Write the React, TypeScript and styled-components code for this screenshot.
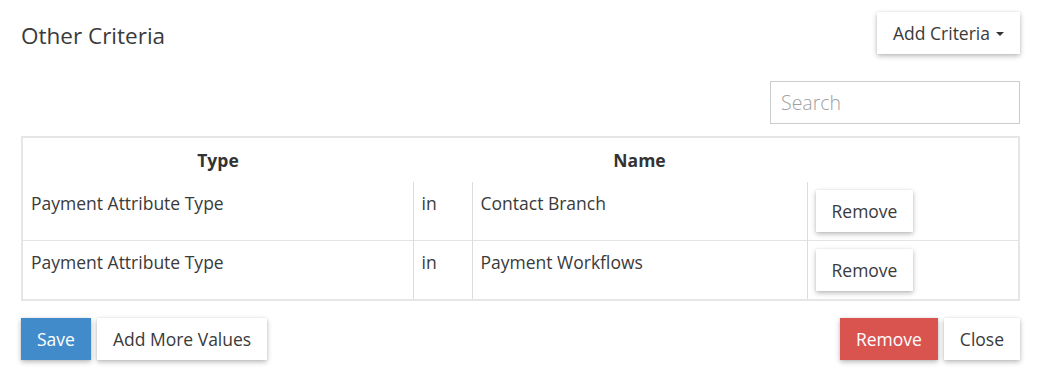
import React from "react";
import styled, { createGlobalStyle } from "styled-components";

const GlobalStyle = createGlobalStyle`
  html, body {
    margin: 0;
    padding: 0;
    background: #fff;
  }
  body {
    font-family: "Open Sans", "Liberation Sans", sans-serif;
    color: #333;
  }
`;

type Criterion = {
  type: string;
  operator: string;
  name: string;
};

const criteria: Criterion[] = [
  { type: "Payment Attribute Type", operator: "in", name: "Contact Branch" },
  { type: "Payment Attribute Type", operator: "in", name: "Payment Workflows" },
];

const App = () => {
  return (
    <S.Page>
      <GlobalStyle />
      <S.Header>
        <S.Title>Other Criteria</S.Title>
        <S.Button>
          Add Criteria
          <S.Caret />
        </S.Button>
      </S.Header>
      <S.SearchRow>
        <S.SearchInput placeholder="Search" />
      </S.SearchRow>
      <S.Table>
        <colgroup>
          <col style={{ width: 391 }} />
          <col style={{ width: 59 }} />
          <col style={{ width: 335 }} />
          <col />
        </colgroup>
        <thead>
          <tr>
            <S.HeadCell>Type</S.HeadCell>
            <S.HeadCell />
            <S.HeadCell>Name</S.HeadCell>
            <S.HeadCell />
          </tr>
        </thead>
        <tbody>
          {criteria.map((item, index) => (
            <S.Row key={index}>
              <S.Cell>{item.type}</S.Cell>
              <S.Cell>{item.operator}</S.Cell>
              <S.Cell>{item.name}</S.Cell>
              <S.Cell>
                <S.Button>Remove</S.Button>
              </S.Cell>
            </S.Row>
          ))}
        </tbody>
      </S.Table>
      <S.Footer>
        <S.ButtonGroup>
          <S.Button $variant="primary">Save</S.Button>
          <S.Button>Add More Values</S.Button>
        </S.ButtonGroup>
        <S.ButtonGroup>
          <S.Button $variant="danger">Remove</S.Button>
          <S.Button>Close</S.Button>
        </S.ButtonGroup>
      </S.Footer>
    </S.Page>
  );
};

export default App;

type Variant = "default" | "primary" | "danger";

const buttonColors: Record<Variant, { bg: string; fg: string }> = {
  default: { bg: "#ffffff", fg: "#3a3a3a" },
  primary: { bg: "#428bca", fg: "#ffffff" },
  danger: { bg: "#d9534f", fg: "#ffffff" },
};

const S = {
  Page: styled.div`
    width: 999px;
    padding: 12px 19px 20px 21px;
  `,
  Header: styled.div`
    display: flex;
    justify-content: space-between;
    align-items: flex-start;
  `,
  Title: styled.h3`
    margin: 0;
    padding-top: 10px;
    font-size: 22.5px;
    font-weight: 400;
    line-height: 28px;
    color: #3a3a3a;
  `,
  Button: styled.button<{ $variant?: Variant }>`
    display: inline-flex;
    align-items: center;
    gap: 6px;
    height: 42px;
    padding: 0 16px;
    border: none;
    border-radius: 0;
    font-family: inherit;
    font-size: 17.5px;
    color: ${(p) => buttonColors[p.$variant ?? "default"].fg};
    background: ${(p) => buttonColors[p.$variant ?? "default"].bg};
    box-shadow: 0 2px 5px rgba(0, 0, 0, 0.28), 0 0 1px rgba(0, 0, 0, 0.12);
    cursor: pointer;
  `,
  Caret: styled.span`
    display: inline-block;
    width: 0;
    height: 0;
    margin-top: 2px;
    border-left: 4px solid transparent;
    border-right: 4px solid transparent;
    border-top: 4px solid #333;
  `,
  SearchRow: styled.div`
    display: flex;
    justify-content: flex-end;
    margin-top: 27px;
  `,
  SearchInput: styled.input`
    box-sizing: border-box;
    width: 250px;
    height: 43px;
    padding: 0 10px;
    border: 1px solid #ccc;
    border-radius: 0;
    font-family: inherit;
    font-size: 19.5px;
    color: #333;
    outline: none;
    &::placeholder {
      color: #a0a0a0;
      font-weight: 300;
    }
  `,
  Table: styled.table`
    width: 100%;
    margin-top: 12px;
    border-collapse: collapse;
    table-layout: fixed;
    border: 2px solid #e6e6e6;
    font-size: 17.5px;
  `,
  HeadCell: styled.th`
    height: 44px;
    padding: 0 8px;
    font-weight: 700;
    text-align: center;
    vertical-align: middle;
    color: #333;
  `,
  Row: styled.tr`
    & + & {
      border-top: 1px solid #e3e3e3;
    }
  `,
  Cell: styled.td`
    height: 41px;
    padding: 8px;
    vertical-align: top;
    line-height: 26px;
    color: #3a3a3a;
    & + & {
      border-left: 1px solid #dcdcdc;
    }
  `,
  Footer: styled.div`
    display: flex;
    justify-content: space-between;
    margin-top: 17px;
  `,
  ButtonGroup: styled.div`
    display: flex;
    gap: 6px;
  `,
};
